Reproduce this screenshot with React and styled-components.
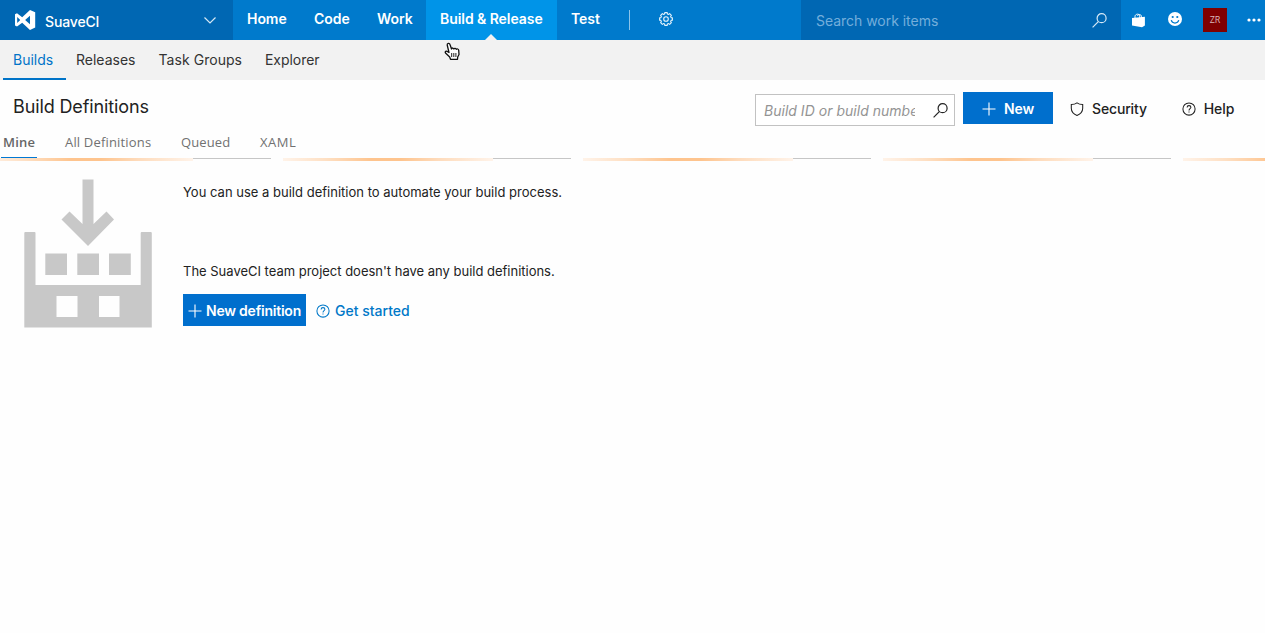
import React from 'react';
import styled, { createGlobalStyle } from 'styled-components';

const Global = createGlobalStyle`
  * { box-sizing: border-box; }
  body { margin: 0; background: #fefefe; overflow: hidden; }
  body, button, input { font-family: Inter, "Liberation Sans", sans-serif; }
  svg { display: block; flex: none; }
`;

const Page = styled.div`
  width: 1265px;
  height: 633px;
  overflow: hidden;
  color: #222;
`;

const TopBar = styled.header`
  display: flex;
  height: 40px;
  background: #007acc;
  color: #fff;
`;

const Project = styled.div`
  display: flex;
  align-items: center;
  width: 233px;
  padding: 0 17px 0 14px;
  background: #0067b3;
`;

const ProjectName = styled.span`
  flex: 1;
  padding: 3px 0 0 9px;
  font-size: 14px;
  font-weight: 500;
  letter-spacing: -0.15px;
`;

const NavItem = styled.a`
  position: relative;
  width: ${(p) => p.$width}px;
  padding-left: 14px;
  line-height: 38px;
  font-size: 14px;
  font-weight: 600;
  letter-spacing: -0.06px;
  white-space: nowrap;
  background: ${(p) => (p.$active ? '#0094e8' : 'transparent')};
`;

const Notch = styled.span`
  position: absolute;
  left: 59px;
  bottom: 0;
  border: 6px solid transparent;
  border-top: 0;
  border-bottom-color: #f2f2f2;
`;

const Divider = styled.span`
  width: 1px;
  height: 20px;
  margin: 10px 29px 0 15px;
  background: #8cc4ea;
`;

const GearSlot = styled.div`
  flex: 1;
  padding-top: 12px;
`;

const WorkSearch = styled.div`
  display: flex;
  justify-content: space-between;
  width: 320px;
  padding: 0 14px 0 15px;
  background: #0067b3;
  color: #74aedb;
  font-size: 14px;
  line-height: 41px;
  letter-spacing: -0.03px;
`;

const WorkSearchIcon = styled.span`
  padding-top: 13px;
  color: #d8eaf7;
`;

const Tools = styled.div`
  display: flex;
  align-items: center;
  width: 144px;
  padding-left: 10px;
`;

const Feedback = styled.span`
  margin: -2px 0 0 22px;
`;

const Avatar = styled.span`
  width: 24px;
  height: 24px;
  margin: 0 20px 0 21px;
  background: #800000;
  color: #d9b8b8;
  font-family: "Open Sans", sans-serif;
  font-size: 9px;
  line-height: 24px;
  text-align: center;
`;

const SubBar = styled.nav`
  display: flex;
  height: 40px;
  padding-left: 3px;
  background: #f2f2f2;
`;

const SubItem = styled.a`
  height: 40px;
  width: ${(p) => p.$width}px;
  padding-left: 10px;
  font-size: 14px;
  line-height: 40px;
  letter-spacing: ${(p) => p.$spacing || 0}px;
  white-space: nowrap;
  color: ${(p) => (p.$active ? '#0074c8' : '#333')};
  border-bottom: ${(p) => (p.$active ? '2px solid #0074c8' : '0')};
`;

const TitleRow = styled.div`
  display: flex;
  height: 53px;
  padding: 12px 0 0 13px;
`;

const Title = styled.h1`
  margin: 0;
  width: 742px;
  font-size: 18px;
  font-weight: 400;
  line-height: 30px;
  letter-spacing: -0.12px;
`;

const BuildSearch = styled.div`
  display: flex;
  align-items: center;
  justify-content: space-between;
  width: 200px;
  height: 32px;
  margin-top: 2px;
  padding: 0 6px 0 8px;
  border: 1px solid #c2c2c2;
  background: #fff;
  color: #222;
`;

const Placeholder = styled.span`
  width: 151px;
  overflow: hidden;
  white-space: nowrap;
  color: #949494;
  font-size: 14px;
  font-style: italic;
  letter-spacing: 0.02px;
`;

const NewButton = styled.button`
  display: flex;
  align-items: center;
  gap: ${(p) => p.$gap}px;
  width: ${(p) => p.$width}px;
  height: 32px;
  margin-left: ${(p) => p.$left || 0}px;
  padding: ${(p) => p.$pad};
  border: 0;
  background: #006fcd;
  color: #fff;
  font-size: 14px;
  font-weight: 600;
  letter-spacing: ${(p) => p.$spacing || 0}px;
  white-space: nowrap;
`;

const ButtonText = styled.span`
  margin-top: -1px;
`;

const Action = styled.a`
  display: flex;
  align-items: center;
  gap: ${(p) => p.$gap}px;
  height: 34px;
  margin-left: ${(p) => p.$left}px;
  color: ${(p) => p.$color || '#222'};
  font-size: 14px;
  font-weight: 500;
  letter-spacing: ${(p) => p.$spacing || 0}px;
`;

const Tabs = styled.nav`
  display: flex;
  height: 25px;
  padding-left: 1px;
`;

const Tab = styled.a`
  height: 25px;
  margin-right: ${(p) => p.$gap}px;
  width: ${(p) => p.$width}px;
  padding-left: 2px;
  font-family: "Open Sans", "Noto Sans", sans-serif;
  font-size: 13px;
  font-weight: ${(p) => (p.$active ? 600 : 400)};
  line-height: 19px;
  letter-spacing: ${(p) => p.$spacing || 0}px;
  white-space: nowrap;
  color: ${(p) => (p.$active ? '#666' : '#717171')};
  border-bottom: ${(p) => (p.$active ? '1px solid #0078d4' : '0')};
`;

const Progress = styled.div`
  height: 3px;
  background:
    linear-gradient(90deg,
      #fff3e9 0, #fee0c4 42px, #fec48e 88px, #fec48e 118px,
      #fedbbb 155px, #fff3e9 210px, transparent 210px)
      -17px 0 / 300px 3px repeat-x,
    linear-gradient(90deg, transparent 193px, #c6c6c6 193px, #c6c6c6 271px, transparent 271px)
      0 0 / 300px 1px repeat-x;
`;

const Empty = styled.main`
  display: flex;
  padding: 18px 0 0 24px;
`;

const Message = styled.section`
  margin-left: 31px;
  padding-top: 1px;
`;

const Line = styled.p`
  margin: 0 0 ${(p) => p.$after}px;
  font-size: 13px;
  line-height: 24px;
  letter-spacing: ${(p) => p.$spacing || 0}px;
`;

const ButtonRow = styled.div`
  display: flex;
`;

const Cursor = styled.div`
  position: absolute;
  left: 444px;
  top: 42px;
`;

const Magnifier = ({ size = 15 }) => (
  <svg width={size} height={size} viewBox="0 0 15 15" fill="none" stroke="currentColor" strokeWidth="1.2">
    <circle cx="9.6" cy="5.2" r="4.5" />
    <path d="M6.3 8.6 L0.6 14.3" />
  </svg>
);

const Plus = () => (
  <svg width="14" height="14" viewBox="0 0 14 14" stroke="#fff" strokeWidth="1.1">
    <path d="M7 0.5V13.5M0.5 7H13.5" />
  </svg>
);

const HelpIcon = () => (
  <svg width="14" height="14" viewBox="0 0 14 14" fill="none" stroke="currentColor" strokeWidth="1.05">
    <circle cx="7" cy="7" r="6.1" />
    <path d="M5.1 5.4C5.1 4.2 6 3.6 7 3.6s1.9.7 1.9 1.7C8.9 6.6 7 6.7 7 8.5" />
    <path d="M7 9.5v1.1" />
  </svg>
);

const Shield = () => (
  <svg width="14" height="14" viewBox="0 0 14 14" fill="none" stroke="currentColor" strokeWidth="1.05">
    <path d="M7 .8C5.5 2 3.4 2.5 1.3 2.5v3.7C1.3 9.5 3.6 12 7 13.4c3.4-1.4 5.7-3.9 5.7-7.2V2.5C10.6 2.5 8.5 2 7 .8Z" />
  </svg>
);

const gearPath = (() => {
  const points = [];
  for (let i = 0; i < 8; i += 1) {
    [[-0.27, 5.3], [-0.19, 6.5], [0.19, 6.5], [0.27, 5.3]].forEach(([offset, radius]) => {
      const angle = (i * Math.PI) / 4 + offset;
      points.push(`${(7 + radius * Math.sin(angle)).toFixed(2)} ${(7 - radius * Math.cos(angle)).toFixed(2)}`);
    });
  }
  return `M${points.join('L')}Z`;
})();

const Gear = () => (
  <svg width="15" height="15" viewBox="0 0 15 15" fill="none" stroke="#e5f3fc" strokeWidth="1.1" strokeLinejoin="round">
    <path d={gearPath} />
    <circle cx="7" cy="7" r="2.3" />
  </svg>
);

const Logo = () => (
  <svg width="22" height="20" viewBox="0 0 22 20">
    <path
      fill="#fff"
      fillRule="evenodd"
      d="M16 0 21.2 2.3V17.4L16 20 8.2 12.7 3 16.6 1 15.5V4.3L3 3.3 8.2 7.2ZM16 5.8 11.1 10 16 14.2ZM3.2 7V13L6.2 10Z"
    />
  </svg>
);

const Bag = () => (
  <svg width="15" height="15" viewBox="0 0 15 15">
    <path d="M4 5V3.5C4 .7 8.5.3 8.8 3V5" fill="none" stroke="#fff" strokeWidth="1" />
    <path d="M6.5 3C7 .8 10.2 1 10.5 3.5V5" fill="none" stroke="#fff" strokeWidth="1" />
    <path d="M1 5 13.9 3.7V12.5L11 14.2 1 12.5Z" fill="#fff" />
  </svg>
);

const Smile = () => (
  <svg width="14" height="14" viewBox="0 0 14 14">
    <circle cx="7" cy="7" r="7" fill="#fff" />
    <circle cx="4.7" cy="5" r="1.1" fill="#007acc" />
    <circle cx="9.3" cy="5" r="1.1" fill="#007acc" />
    <path d="M3.2 8.2C4.3 12 9.7 12 10.8 8.2" fill="none" stroke="#007acc" strokeWidth="1.2" />
  </svg>
);

const BuildArt = () => (
  <svg width="128" height="149" viewBox="0 -0.5 128 149" fill="#c8c8c8">
    <path d="M58.5 0h11v44.5L82.5 32 90 40 64 66.5 37.5 40 45.5 32 58.5 44.500Z" />
    <path d="M21.300 74h21.700v21.500H21.300ZM53.300 74h21.700v21.500H53.300ZM85 74h21.800v21.500H85Z" />
    <path
      fillRule="evenodd"
      d="M.3 53.500a1 1 0 0 1 1-1H10.500a1 1 0 0 1 1 1V105.500H116.700V53.500a1 1 0 0 1 1-1h9.100a1 1 0 0 1 1 1v94.500H.3ZM32.500 116.500v21h21v-21ZM75 116.500v21h20.500v-21Z"
    />
  </svg>
);

const Hand = () => (
  <svg width="17" height="19" viewBox="0 0 17 19">
    <path
      d="M3.2 3C3 1 5.5.7 6 2.5L7.5 7C7.8 5.6 9.5 5.8 9.9 7 10.4 5.9 12 6.2 12.3 7.3 13 6.5 14.6 7 14.7 8.3L15 12.5 13.7 15 13.5 17.3H6.500L5.7 15 1.5 11C.6 9.7 2.2 8.5 3.7 9.7L5 10.5Z"
      fill="#fff"
      stroke="#111"
      strokeWidth="1.3"
      strokeLinejoin="round"
    />
    <path d="M7.7 11v4M9.8 11v4M11.9 11v4" stroke="#222" strokeWidth="1" />
  </svg>
);

export default function App() {
  return (
    <Page>
      <Global />
      <TopBar>
        <Project>
          <Logo />
          <ProjectName>SuaveCI</ProjectName>
          <svg width="12" height="7" viewBox="0 0 12 7" fill="none" stroke="#d5e8f5" strokeWidth="1.2">
            <path d="M.5.5 6 6 11.5.5" />
          </svg>
        </Project>
        <NavItem $width={67}>Home</NavItem>
        <NavItem $width={63}>Code</NavItem>
        <NavItem $width={63}>Work</NavItem>
        <NavItem $width={131} $active>
          Build &amp; Release
          <Notch />
        </NavItem>
        <NavItem $width={57}>Test</NavItem>
        <Divider />
        <GearSlot><Gear /></GearSlot>
        <WorkSearch>
          Search work items
          <WorkSearchIcon><Magnifier /></WorkSearchIcon>
        </WorkSearch>
        <Tools>
          <Bag />
          <Feedback><Smile /></Feedback>
          <Avatar>ZR</Avatar>
          <svg width="14" height="4" viewBox="0 0 14 4" fill="#fff">
            <circle cx="2" cy="2" r="1.6" />
            <circle cx="7" cy="2" r="1.6" />
            <circle cx="12" cy="2" r="1.6" />
          </svg>
        </Tools>
      </TopBar>
      <SubBar>
        <SubItem $width={63} $active>Builds</SubItem>
        <SubItem $width={82.5}>Releases</SubItem>
        <SubItem $width={106.5} $spacing={0.05}>Task Groups</SubItem>
        <SubItem $width={80} $spacing={-0.05}>Explorer</SubItem>
      </SubBar>
      <TitleRow>
        <Title>Build Definitions</Title>
        <BuildSearch>
          <Placeholder>Build ID or build number</Placeholder>
          <Magnifier />
        </BuildSearch>
        <NewButton $width={90} $left={8} $gap={8} $pad="2px 0 0 19px" $spacing={-0.15}>
          <Plus />
          <ButtonText>New</ButtonText>
        </NewButton>
        <Action $left={17} $gap={8} $spacing={-0.15}><Shield /><ButtonText>Security</ButtonText></Action>
        <Action $left={35} $gap={8} $spacing={-0.1}><HelpIcon /><ButtonText>Help</ButtonText></Action>
      </TitleRow>
      <Tabs>
        <Tab $width={36} $gap={26} $spacing={0.2} $active>Mine</Tab>
        <Tab $width={90} $gap={26} $spacing={0.17}>All Definitions</Tab>
        <Tab $width={53} $gap={26} $spacing={0.12}>Queued</Tab>
        <Tab $width={40} $gap={0} $spacing={0.5}>XAML</Tab>
      </Tabs>
      <Progress />
      <Empty>
        <BuildArt />
        <Message>
          <Line $after={55} $spacing={0.01}>You can use a build definition to automate your build process.</Line>
          <Line $after={11} $spacing={-0.01}>The SuaveCI team project doesn't have any build definitions.</Line>
          <ButtonRow>
            <NewButton $width={123} $gap={4} $pad="2px 0 0 5px" $spacing={-0.22}>
              <Plus />
              <ButtonText>New definition</ButtonText>
            </NewButton>
            <Action $left={10} $gap={5} $color="#0078c8">
              <HelpIcon />
              <ButtonText>Get started</ButtonText>
            </Action>
          </ButtonRow>
        </Message>
      </Empty>
      <Cursor><Hand /></Cursor>
    </Page>
  );
}
